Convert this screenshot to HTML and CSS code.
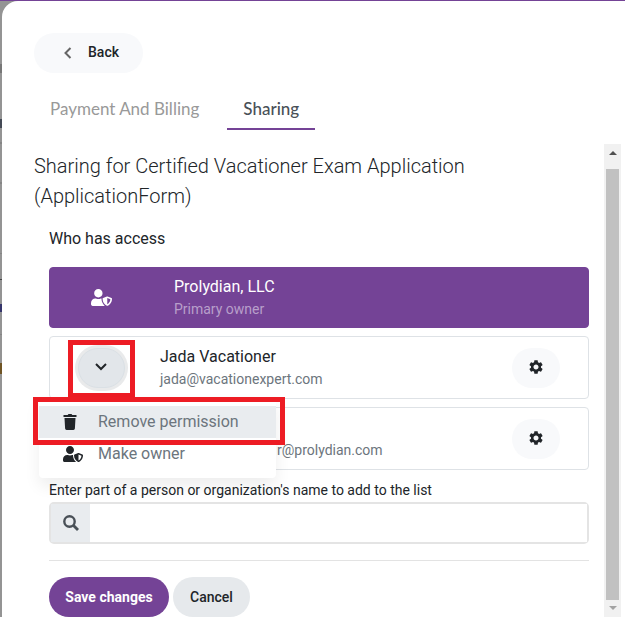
FILE: index.html
```html
<!DOCTYPE html>
<html lang="en">
<head>
<meta charset="utf-8">
<title>Sharing</title>
<link rel="stylesheet" href="styles.css">
</head>
<body>
<svg class="defs" aria-hidden="true">
  <symbol id="user-shield" viewBox="0 0 640 512"><path fill="currentColor" d="M622.3 271.1l-115.2-45c-4.1-1.6-12.6-3.7-22.2 0l-115.2 45c-10.7 4.2-17.7 14-17.7 24.9 0 111.6 68.7 188.8 132.9 213.9 9.6 3.7 18 1.6 22.2 0C558.4 489.9 640 420.5 640 296c0-10.9-7-20.7-17.7-24.9zM496 462.4V273.3l95.5 37.3c-5.6 87.1-60.9 135.4-95.5 151.8zM224 256c70.7 0 128-57.3 128-128S294.7 0 224 0 96 57.3 96 128s57.3 128 128 128zm96 40c0-2.5.8-4.8 1.1-7.2-2.5-.1-4.9-.8-7.5-.8h-16.7c-22.2 10.2-46.9 16-72.9 16s-50.6-5.8-72.9-16h-16.7C60.2 288 0 348.2 0 422.4V464c0 26.5 21.5 48 48 48h352c6.8 0 13.3-1.5 19.2-4-54-42.900-99.200-116.700-99.200-212z"/></symbol>
  <symbol id="gear" viewBox="2 2 20 20"><path fill="currentColor" d="M19.14 12.94c.04-.3.06-.61.06-.94 0-.32-.02-.64-.07-.94l2.03-1.58c.18-.14.23-.41.12-.61l-1.92-3.32c-.12-.22-.37-.29-.59-.22l-2.39.96c-.5-.38-1.03-.7-1.62-.94l-.36-2.54c-.04-.24-.24-.41-.48-.41h-3.840c-.24 0-.43.17-.47.41l-.36 2.54c-.59.24-1.13.57-1.62.94l-2.39-.96c-.22-.08-.47 0-.59.22L2.74 8.87c-.12.21-.08.47.12.61l2.03 1.58c-.05.3-.09.63-.09.94s.02.64.07.94l-2.03 1.58c-.18.14-.23.41-.12.61l1.92 3.32c.12.22.37.29.59.22l2.39-.96c.5.38 1.03.7 1.62.94l.36 2.54c.05.24.24.41.48.41h3.84c.24 0 .44-.17.47-.41l.36-2.54c.59-.24 1.13-.56 1.62-.94l2.39.96c.22.08.47 0 .59-.22l1.92-3.32c.12-.22.07-.47-.12-.61l-2.01-1.58zM12 15.6c-1.98 0-3.6-1.62-3.6-3.6s1.62-3.6 3.6-3.6 3.6 1.620 3.600 3.600-1.620 3.600-3.600 3.600z"/></symbol>
</svg>
<div class="modal">
  <header class="top">
    <button class="btn back" type="button">
      <svg class="back-icon" viewBox="0 0 8 12" aria-hidden="true"><path d="M6.500 1 1.500 6l5 5" fill="none" stroke="#666" stroke-width="2"/></svg>
      Back
    </button>
  </header>
  <nav class="tabs">
    <a class="tab" href="#billing">Payment And Billing</a>
    <a class="tab active" href="#sharing">Sharing</a>
  </nav>
  <div class="body">
    <main class="content">
      <h1>Sharing for Certified Vacationer Exam Application (ApplicationForm)</h1>
      <form class="access">
        <h2>Who has access</h2>
        <div class="card owner">
          <div class="lead"><svg class="shield" aria-hidden="true"><use href="#user-shield"/></svg></div>
          <div class="who"><div class="name">Prolydian, LLC</div><div class="detail">Primary owner</div></div>
        </div>
        <div class="card">
          <div class="lead">
            <button class="btn toggle" type="button" aria-label="Permissions">
              <svg class="chevron" viewBox="0 0 12 8" aria-hidden="true"><path d="m1 1 5 5 5-5" fill="none" stroke="#212529" stroke-width="2"/></svg>
            </button>
            <span class="mark mark-toggle"></span>
          </div>
          <div class="who"><div class="name">Jada Vacationer</div><div class="detail">jada@vacationexpert.com</div></div>
          <button class="btn settings" type="button" aria-label="Settings"><svg class="gear" aria-hidden="true"><use href="#gear"/></svg></button>
          <div class="menu">
            <button class="item selected" type="button">
              <svg class="menu-icon" viewBox="0 0 20 16" aria-hidden="true"><path fill="#212529" d="M.5 1h4.200L5.500 0h3l.8 1h4.200v2H.5zM1.500 4h11l-.6 10.600A1.500 1.500 0 0 1 10.400 16H3.600a1.500 1.500 0 0 1-1.500-1.400z"/></svg>
              Remove permission
            </button>
            <button class="item" type="button">
              <svg class="menu-icon" aria-hidden="true"><use href="#user-shield"/></svg>
              Make owner
            </button>
            <span class="mark mark-item"></span>
          </div>
        </div>
        <div class="card">
          <div class="lead"></div>
          <div class="who covered"><div class="name">&nbsp;</div><div class="detail">r@prolydian.com</div></div>
          <button class="btn settings" type="button" aria-label="Settings"><svg class="gear" aria-hidden="true"><use href="#gear"/></svg></button>
        </div>
        <label for="person">Enter part of a person or organization's name to add to the list</label>
        <div class="search">
          <span class="addon"><svg class="glass" viewBox="0 0 16 16" aria-hidden="true"><circle cx="6.500" cy="6.500" r="5.200" fill="none" stroke="#495057" stroke-width="2.400"/><path d="m10.500 10.500 4.500 4.500" stroke="#495057" stroke-width="2.800"/></svg></span>
          <input id="person" type="text">
        </div>
        <hr>
        <div class="actions">
          <button class="btn save" type="submit">Save changes</button>
          <button class="btn cancel" type="button">Cancel</button>
        </div>
      </form>
    </main>
    <div class="scrollbar" aria-hidden="true">
      <span class="arrow up"></span>
      <span class="thumb"></span>
      <span class="arrow down"></span>
    </div>
  </div>
</div>
</body>
</html>
```

FILE: styles.css
```css
* { box-sizing: border-box; }
body {
  margin: 0;
  padding-left: 2px;
  border-top: 1px solid #744396;
  /* dimmed page behind the dialog */
  background: #949494 linear-gradient(
    #949494 64px, #777 64px 73px, #949494 73px 119px, #444a55 119px 128px,
    #949494 128px 142px, #858585 142px 144px, #949494 144px 182px, #858585 182px 184px,
    #949494 184px 253px, #858585 253px 254px, #949494 254px 279px, #444 279px 280px,
    #949494 280px 304px, #35356b 304px 312px, #949494 312px 334px, #858585 334px 335px,
    #949494 335px 363px, #6f5424 363px 374px, #949494 374px) no-repeat;
  color: #212529;
  font: 16px/24px Roboto, "Liberation Sans", sans-serif;
  overflow: hidden;
}
.defs { display: none; }
svg { display: block; }
button, input { font: inherit; color: inherit; }
.modal {
  display: flex;
  flex-direction: column;
  height: calc(100vh - 1px);
  background: #fff;
  border-top-left-radius: 16px;
}
.top { padding: 32px 32px 16px; }
.btn {
  display: flex;
  align-items: center;
  justify-content: center;
  height: 40px;
  padding: 0 16px;
  border: 0;
  border-radius: 20px;
  background: #f8f9fb;
  font-size: 14px;
  font-weight: 500;
}
.back { gap: 16px; padding: 0 24px 2px 30px; }
.back-icon { width: 8px; height: 12px; margin-top: 2px; }
.tabs { display: flex; gap: 12px; padding: 0 32px; }
.tab {
  height: 41px;
  padding: 8px 16px 0;
  border-bottom: 2px solid transparent;
  color: #999;
  font-family: Lato, sans-serif;
  font-size: 17px;
  text-decoration: none;
}
.tab.active { border-color: #744396; color: #495057; font-weight: 500; }
.body { display: flex; flex: 1; min-height: 0; margin-top: 14px; }
.content { flex: 1; padding: 7px 15px 0 32px; }
h1 { margin: 0 0 16px; font-size: 20px; line-height: 30px; font-weight: 300; }
.access { padding-left: 15px; }
h2 { margin: 0 0 16px; font-size: 16px; font-weight: 400; }
.card {
  position: relative;
  display: flex;
  align-items: center;
  height: 63px;
  margin-bottom: 8px;
  padding-right: 28px;
  border: 1px solid #dee2e6;
  border-radius: 4px;
}
.owner { height: 61px; border-color: #744396; background: #744396; color: #fff; }
.lead { position: relative; display: flex; justify-content: center; width: 102px; margin-right: 8px; }
.owner .lead { margin-right: 22px; }
.who { flex: 1; padding-bottom: 2px; }
.covered { padding-left: 117px; }
.name { line-height: 24px; }
.detail { color: #6c757d; font-size: 14px; line-height: 20px; }
.owner .detail { color: #b89fca; }
.shield { width: 21px; height: 17px; }
.toggle {
  width: 47px;
  padding: 0 0 2px;
  border: 1px solid #dae0e5;
  background: #e2e6ea;
  box-shadow: 0 0 0 3px #e9eaeb;
}
.chevron { flex: none; width: 12px; height: 8px; }
.settings { width: 48px; padding-bottom: 2px; }
.gear { flex: none; width: 14px; height: 14px; }
.menu {
  position: absolute;
  z-index: 2;
  top: 61px;
  left: -11px;
  width: 237px;
  padding: 8px 0;
  border-radius: 4px;
  background: #fff;
  box-shadow: 0 8px 16px rgba(0, 0, 0, .07);
}
.item {
  display: flex;
  align-items: center;
  gap: 15px;
  width: 100%;
  height: 32px;
  padding: 0 24px;
  border: 0;
  background: #fff;
  color: #6c757d;
}
.selected { background: #e9ecef; }
.menu-icon { width: 20px; height: 16px; color: #212529; }
.mark { position: absolute; border: 5px solid #ed1c24; pointer-events: none; }
.mark-toggle { top: -8px; left: 18px; width: 67px; height: 58px; }
.mark-item { top: -1px; left: -6px; width: 252px; height: 48px; }
label { display: block; margin-top: 10px; font-size: 14px; line-height: 20px; }
.search {
  display: flex;
  height: 42px;
  margin-top: 2px;
  border: 2px solid #e4e4e4;
  border-radius: 5px;
}
.addon { display: flex; align-items: center; justify-content: center; width: 39px; background: #e9ecef; }
.glass { width: 16px; height: 16px; }
.search input { flex: 1; min-width: 0; padding: 0 12px; border: 0; background: #fff; }
hr { margin: 16px 0; border: 0; border-top: 1px solid #e3e3e3; }
.actions { display: flex; gap: 4px; }
.save { min-width: 120px; background: #744396; color: #fff; font-weight: 700; }
.cancel { padding: 0 17px; background: #e6e9ec; }
.scrollbar {
  display: flex;
  flex-direction: column;
  align-items: center;
  width: 17px;
  margin-right: 4px;
  background: #f1f1f1;
}
.thumb { flex: 1; width: 13px; background: #c1c1c1; }
.arrow { border: solid transparent; border-width: 0 4px; }
.up { height: 4px; margin: 7px 0 14px; border-bottom: 4px solid #505050; }
.down { height: 4px; margin: 6px 0 7px; border-top: 4px solid #a3a3a3; }
```
